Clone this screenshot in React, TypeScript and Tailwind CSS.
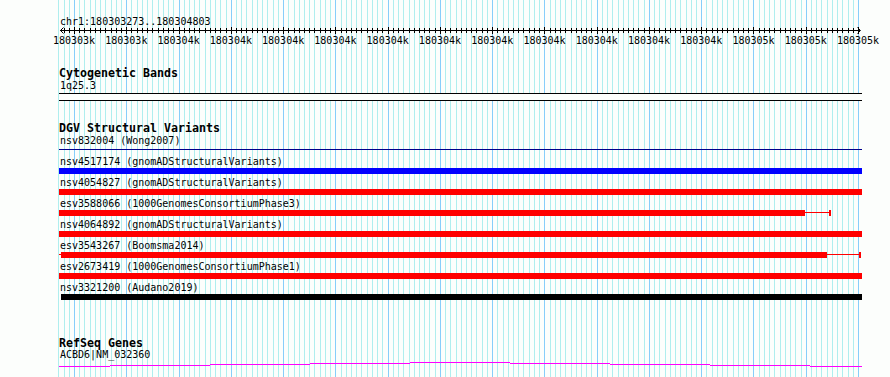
import React from "react";

const OX = 59;
const W = 803;
const gridLines = Array.from({ length: 154 }, (_, i) => {
  const n = i - 3;
  return { x: Math.round(74 + n * 5.2267), major: n % 10 === 0 };
});

const labels = Array.from({ length: 16 }, (_, i) => ({
  c: 74 + i * 52.267,
  t: i < 2 ? "180303k" : i < 13 ? "180304k" : "180305k",
}));

type Row = {
  label: string;
  color: string;
  bar?: [number, number];
  thin?: [number, number][];
  caps?: number[];
};

const rows: Row[] = [
  { label: "nsv832004 (Wong2007)", color: "#00008b", thin: [[59, 862]] },
  { label: "nsv4517174 (gnomADStructuralVariants)", color: "#0000ff", bar: [59, 862] },
  { label: "nsv4054827 (gnomADStructuralVariants)", color: "#ff0000", bar: [59, 862] },
  {
    label: "esv3588066 (1000GenomesConsortiumPhase3)",
    color: "#ff0000",
    bar: [59, 805],
    thin: [[805, 830]],
    caps: [829],
  },
  { label: "nsv4064892 (gnomADStructuralVariants)", color: "#ff0000", bar: [59, 862] },
  {
    label: "esv3543267 (Boomsma2014)",
    color: "#ff0000",
    bar: [61, 827],
    thin: [
      [59, 61],
      [827, 860],
    ],
    caps: [859],
  },
  { label: "esv2673419 (1000GenomesConsortiumPhase1)", color: "#ff0000", bar: [59, 862] },
  { label: "nsv3321200 (Audano2019)", color: "#000000", bar: [61, 862] },
];

const geneSteps: [number, number, number][] = [
  [59, 110, 366],
  [110, 210, 365],
  [210, 310, 364],
  [310, 410, 363],
  [410, 510, 362],
  [510, 610, 363],
  [610, 710, 364],
  [710, 810, 365],
  [810, 862, 366],
];

function Title({ children, className = "" }: { children: React.ReactNode; className?: string }) {
  return <div className={`text-[11.63px] leading-[12px] font-bold pl-[0px] ${className}`}>{children}</div>;
}

function Text({ children, className = "" }: { children: React.ReactNode; className?: string }) {
  return <div className={`text-[10px] leading-[10px] pl-[1px] whitespace-pre ${className}`}>{children}</div>;
}

export default function App() {
  return (
    <div className="relative w-[890px] h-[377px] overflow-hidden bg-[#fcfefc] text-black font-['DejaVu_Sans_Mono','Liberation_Mono',monospace]">
      <svg className="absolute inset-0 pointer-events-none" width={890} height={377} shapeRendering="crispEdges">
        {gridLines.map((g, i) => (
          <rect key={i} x={g.x} y={0} width={1} height={377} fill={g.major ? "#87cefa" : "#afeeee"} />
        ))}
      </svg>

      <div className="relative ml-[59px] w-[803px] flex flex-col">
        <div className="pt-[17px] text-[10px] leading-[9px] pl-[1px]">chr1:180303273..180304803</div>

        <svg width={W} height={9} shapeRendering="crispEdges" className="block">
          <rect x={1} y={4} width={800} height={1} fill="#000" />
          {gridLines
            .filter((g) => g.x >= 60 && g.x <= 860)
            .map((g, i) => (
              <rect
                key={i}
                x={g.x - OX}
                y={g.major ? 1 : 2}
                width={1}
                height={g.major ? 7 : 5}
                fill="#000"
              />
            ))}
          <path d="M4.5 1.5 L1.5 4.5 L4.5 7.5" stroke="#000" strokeWidth={1} fill="none" shapeRendering="auto" />
          <path d="M798.5 1.5 L801.5 4.5 L798.5 7.5" stroke="#000" strokeWidth={1} fill="none" shapeRendering="auto" />
        </svg>

        <div className="relative h-[11px] text-[10px] leading-[11px]">
          {labels.map((l, i) => (
            <span
              key={i}
              className="absolute top-0 w-[42px] text-center whitespace-nowrap"
              style={{ left: l.c - OX - 21 }}
            >
              {l.t}
            </span>
          ))}
        </div>

        <Title className="mt-[21px]">Cytogenetic Bands</Title>
        <Text className="mt-[2px]">1q25.3</Text>
        <div className="mt-[2px] h-[8px] border-y border-black bg-[#fcfefc]" />

        <Title className="mt-[21px]">DGV Structural Variants</Title>
        <div className="mt-[2px] flex flex-col">
          {rows.map((r, i) => (
            <div key={i} className="h-[21px] flex flex-col">
              <Text>{r.label}</Text>
              <svg width={W} height={6} shapeRendering="crispEdges" className="block mt-[1px]">
                {r.bar && <rect x={r.bar[0] - OX} y={0} width={r.bar[1] - r.bar[0]} height={6} fill={r.color} />}
                {r.thin?.map((t, j) => (
                  <rect key={j} x={t[0] - OX} y={2} width={t[1] - t[0]} height={1} fill={r.color} />
                ))}
                {r.caps?.map((c, j) => (
                  <rect key={j} x={c - OX} y={0} width={2} height={6} fill={r.color} />
                ))}
              </svg>
            </div>
          ))}
        </div>

        <Title className="mt-[33px]">RefSeq Genes</Title>
        <Text className="mt-[1px]">ACBD6|NM_032360</Text>
        <svg width={W} height={8} shapeRendering="crispEdges" className="block">
          {geneSteps.map((s, i) => (
            <rect key={i} x={s[0] - OX} y={s[2] - 360} width={s[1] - s[0]} height={1} fill="#ff00ff" />
          ))}
        </svg>
      </div>
    </div>
  );
}
